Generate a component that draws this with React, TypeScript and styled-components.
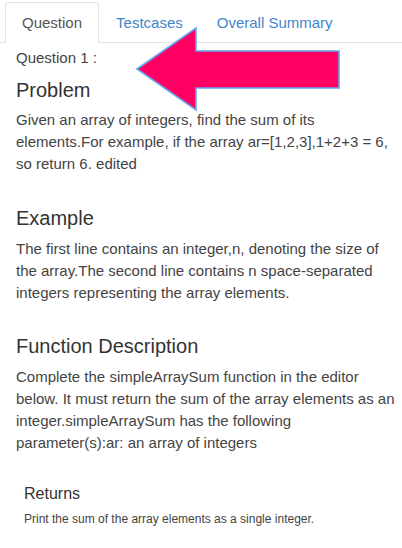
import styled, { createGlobalStyle } from 'styled-components';

const GlobalStyle = createGlobalStyle`
  html, body {
    margin: 0;
    padding: 0;
    background: #fff;
  }
  body {
    font-family: "Liberation Sans", Arial, sans-serif;
    color: #333;
  }
`;

const Page = styled.div`
  position: relative;
  width: 402px;
  height: 548px;
  overflow: hidden;
  background: #fff;
`;

const TabBar = styled.ul`
  display: flex;
  list-style: none;
  margin: 0;
  padding: 2px 0 0 5px;
  border-bottom: 1px solid #e2e2e2;
`;

const Tab = styled.li<{ $active?: boolean }>`
  height: 39px;
  margin-bottom: -1px;
  padding: 0 16px;
  display: flex;
  align-items: center;
  font-size: 15px;
  border: 1px solid ${(p) => (p.$active ? '#e2e2e2' : 'transparent')};
  border-bottom-color: ${(p) => (p.$active ? '#fff' : 'transparent')};
  border-radius: 4px 4px 0 0;
  background: ${(p) => (p.$active ? '#fff' : 'transparent')};
  color: ${(p) => (p.$active ? '#555' : '#3f86cc')};
`;

const Content = styled.div`
  padding: 0 6px 0 16px;
`;

const Label = styled.div`
  margin-top: 4px;
  font-size: 15px;
  line-height: 22px;
  color: #444;
`;

const Heading = styled.h4<{ $gap: number }>`
  margin: ${(p) => p.$gap}px 0 0;
  font-size: 20px;
  line-height: 24px;
  font-weight: normal;
  color: #333;
`;

const Text = styled.p<{ $gap?: number }>`
  margin: ${(p) => p.$gap ?? 8}px 0 0;
  font-size: 15px;
  line-height: 22px;
  color: #444;
`;

const Returns = styled.section`
  margin-top: 30px;
  padding-left: 8px;
`;

const SubHeading = styled.h5`
  margin: 0;
  font-size: 16px;
  line-height: 20px;
  font-weight: normal;
  color: #333;
`;

const SmallText = styled.p`
  margin: 7px 0 0;
  font-size: 12px;
  line-height: 16px;
  color: #444;
`;

const Arrow = styled.svg`
  position: absolute;
  left: 0;
  top: 0;
  pointer-events: none;
`;

export default function App() {
  return (
    <Page>
      <GlobalStyle />
      <TabBar>
        <Tab $active>Question</Tab>
        <Tab>Testcases</Tab>
        <Tab>Overall Summary</Tab>
      </TabBar>
      <Content>
        <Label>Question 1 :</Label>
        <Heading $gap={9}>Problem</Heading>
        <Text $gap={7}>
          Given an array of integers, find the sum of its elements.For example, if the array
          ar=[1,2,3],1+2+3 = 6, so return 6. edited
        </Text>
        <Heading $gap={31}>Example</Heading>
        <Text>
          The first line contains an integer,n, denoting the size of the array.The second line
          contains n space-separated integers representing the array elements.
        </Text>
        <Heading $gap={30}>Function Description</Heading>
        <Text>
          Complete the simpleArraySum function in the editor below. It must return the sum of the
          array elements as an integer.simpleArraySum has the following parameter(s):ar: an array
          of integers
        </Text>
        <Returns>
          <SubHeading>Returns</SubHeading>
          <SmallText>Print the sum of the array elements as a single integer.</SmallText>
        </Returns>
      </Content>
      <Arrow width="402" height="548" viewBox="0 0 402 548">
        <polygon
          points="137,69 196,28 196,51 339,51 339,88 196,88 196,110"
          fill="#ff0062"
          stroke="#62a8f2"
          strokeWidth="1.6"
          strokeLinejoin="miter"
        />
      </Arrow>
    </Page>
  );
}
